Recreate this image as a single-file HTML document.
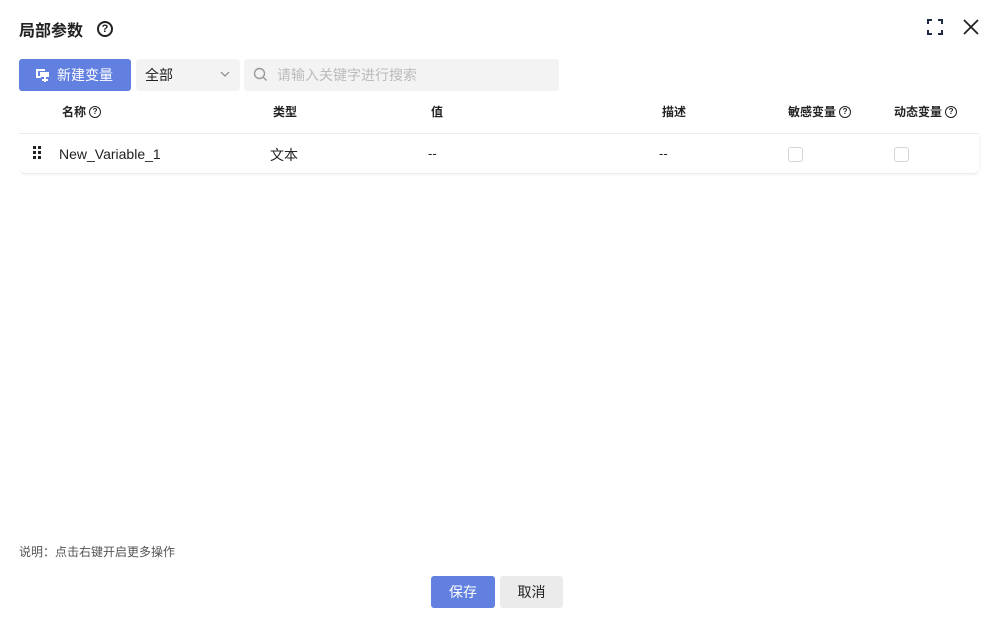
<!DOCTYPE html>
<html><head><meta charset="utf-8"><style>
*{box-sizing:border-box;margin:0;padding:0}
body{width:997px;height:620px;background:#fff;font-family:"Liberation Sans","Noto Sans CJK SC",sans-serif;color:#222;position:relative;overflow:hidden}
.a{position:absolute}
.q{display:inline-block;border:1.5px solid #222;border-radius:50%;text-align:center;font-weight:bold}
.th{font-size:12px;font-weight:bold;top:103px;color:#222;display:flex;align-items:center;gap:3px;height:17px}
.cb{width:15px;height:15px;border:1px solid #d5d5d5;border-radius:3px;top:147px}
</style></head><body>
<div class="a" style="left:19px;top:17px;font-size:16px;font-weight:bold;color:#222">局部参数</div>
<div class="a q" style="left:97px;top:21px;width:16px;height:16px;font-size:11px;line-height:13px;border-width:2px">?</div>
<svg class="a" style="left:927px;top:19px" width="16" height="16" viewBox="0 0 16 16" fill="none" stroke="#1f2a44" stroke-width="2"><path d="M1 5V1h4M11 1h4v4M15 11v4h-4M5 15H1v-4"/></svg>
<svg class="a" style="left:963px;top:19px" width="16" height="16" viewBox="0 0 16 16" stroke="#222" stroke-width="1.8"><path d="M1 1L15 15M15 1L1 15"/></svg>
<div class="a" style="left:19px;top:59px;width:112px;height:32px;background:#6280e0;border-radius:3px;color:#fff;font-size:14px;line-height:32px;padding-left:38px">新建变量</div>
<svg class="a" style="left:35px;top:67px" width="15" height="15" viewBox="0 0 15 15" fill="#fff"><path d="M1 2h9v2H3v5h3v2H1z"/><rect x="5" y="5" width="9" height="5"/><path d="M9 10h2v2h2v2h-2v1H9v-1H7v-2h2z"/></svg>
<div class="a" style="left:136px;top:59px;width:104px;height:32px;background:#f3f3f3;border-radius:3px;font-size:14px;line-height:32px;padding-left:9px">全部</div>
<svg class="a" style="left:220px;top:71px" width="10" height="7" viewBox="0 0 10 7" fill="none" stroke="#888" stroke-width="1.2"><path d="M1 1l4 4 4-4"/></svg>
<div class="a" style="left:244px;top:59px;width:315px;height:32px;background:#f3f3f3;border-radius:3px;font-size:14px;line-height:32px;padding-left:33px;color:#bbb">请输入关键字进行搜索</div>
<svg class="a" style="left:253px;top:67px" width="15" height="15" viewBox="0 0 15 15" fill="none" stroke="#999" stroke-width="1.4"><circle cx="6.5" cy="6.5" r="5"/><path d="M10 10l3.5 3.5"/></svg>
<div class="a th" style="left:62px">名称<span class="q" style="width:12px;height:12px;font-size:8px;line-height:9px">?</span></div>
<div class="a th" style="left:273px">类型</div>
<div class="a th" style="left:431px">值</div>
<div class="a th" style="left:662px">描述</div>
<div class="a th" style="left:788px">敏感变量<span class="q" style="width:12px;height:12px;font-size:8px;line-height:9px">?</span></div>
<div class="a th" style="left:894px">动态变量<span class="q" style="width:12px;height:12px;font-size:8px;line-height:9px">?</span></div>
<div class="a" style="left:19px;top:133px;width:960px;height:41px;border-top:1px solid #ececec;border-bottom:1px solid #ececec;border-radius:0 0 6px 6px;box-shadow:1px 1px 2px rgba(0,0,0,.05)"></div>
<svg class="a" style="left:32px;top:146px" width="10" height="14" viewBox="0 0 10 14" fill="#222"><rect x="1" y="0" width="3" height="3"/><rect x="6" y="0" width="3" height="3"/><rect x="1" y="5" width="3" height="3"/><rect x="6" y="5" width="3" height="3"/><rect x="1" y="10" width="3" height="3"/><rect x="6" y="10" width="3" height="3"/></svg>
<div class="a" style="left:59px;top:146px;font-size:14px">New_Variable_1</div>
<div class="a" style="left:270px;top:145px;font-size:14px">文本</div>
<div class="a" style="left:428px;top:146px;font-size:13px">--</div>
<div class="a" style="left:659px;top:146px;font-size:13px">--</div>
<div class="a cb" style="left:788px"></div>
<div class="a cb" style="left:894px"></div>
<div class="a" style="left:19px;top:543px;font-size:12px;color:#555">说明：点击右键开启更多操作</div>
<div class="a" style="left:431px;top:576px;width:64px;height:32px;background:#6280e0;border-radius:3px;color:#fff;font-size:14px;line-height:32px;text-align:center">保存</div>
<div class="a" style="left:500px;top:576px;width:63px;height:32px;background:#ebebeb;border-radius:3px;color:#222;font-size:14px;line-height:32px;text-align:center">取消</div>
</body></html>
